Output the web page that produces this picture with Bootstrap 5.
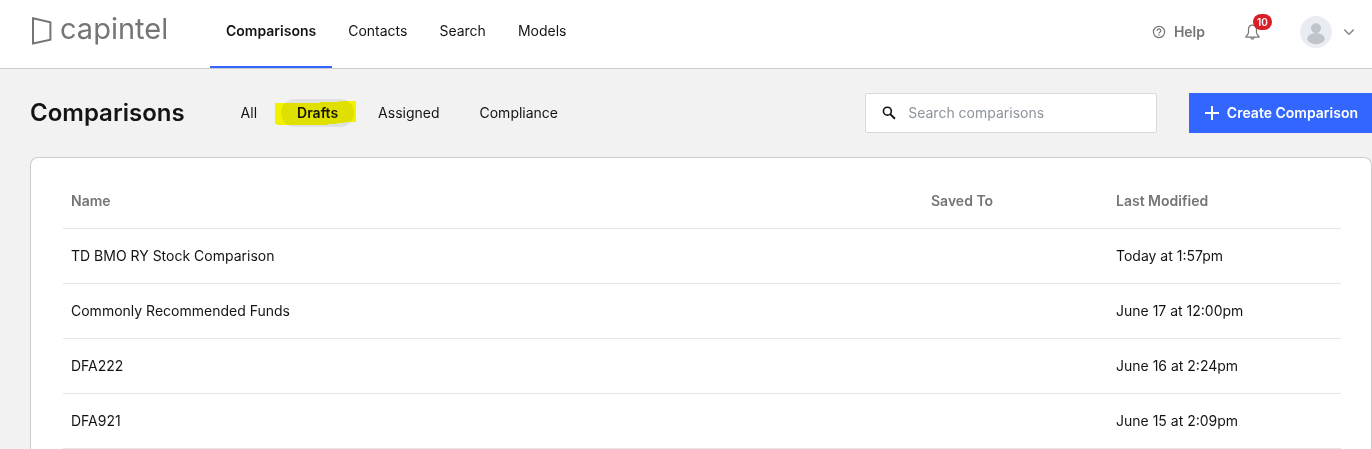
<!DOCTYPE html>
<html lang="en">
<head>
<meta charset="utf-8">
<meta name="viewport" content="width=device-width, initial-scale=1">
<title>Comparisons</title>
<link rel="stylesheet" href="https://cdn.jsdelivr.net/npm/bootstrap@5.3.0/dist/css/bootstrap.min.css">
<style>
  body { font-family: Inter, "Liberation Sans", sans-serif; font-size: 14px; line-height: 20px; color: #141414; background: #f2f2f2; }
  .topbar { height: 69px; background: #fff; border-bottom: 1px solid #ccc; }
  .brand-link { width: 210px; padding: 16px 0 0 31px; color: #757575; }
  .brand-text { font-weight: 400; font-size: 29px; line-height: 26px; margin-left: 8px; }
  .main-nav .nav-link { padding: 21px 16px 25px; border-bottom: 2px solid transparent; color: #141414; }
  .main-nav .nav-link.active { font-weight: 600; border-color: #3366ff; }
  .tools { height: 64px; padding-right: 14px; color: #757575; }
  .tools button { color: inherit; }
  .help-link { color: #757575; font-weight: 600; }
  .tools .alert-count { left: 8px; top: -10px; padding: 2px 4px; min-width: 19px; font-size: 10px; line-height: 12px; font-weight: 600; background: #da1e28; }
  .page-body { padding: 24px 0 0 30px; }
  .page-title { font-size: 24px; line-height: 40px; font-weight: 600; }
  .tab-pills { margin-left: 40px; }
  .tab-pills .nav-link { padding: 4px 16px; border-radius: 14px; color: #141414; }
  .tab-pills .nav-link.active { font-weight: 600; background: #e0e0e0; color: #141414; }
  .marker { left: -6px; top: 2px; mix-blend-mode: multiply; pointer-events: none; }
  .search-box { width: 292px; height: 40px; margin-right: 32px; border: 1px solid #d9d9d9; border-radius: 2px; background: #fff; padding: 0 16px; gap: 12px; }
  .search-box input { font-size: 14px; line-height: 20px; }
  .search-box input::placeholder { color: #8d949c; opacity: 1; }
  .create-btn { height: 40px; padding: 0 14px 0 15px; gap: 7px; border: 0; border-radius: 0; background: #3366ff; color: #fff; font-size: 14px; line-height: 20px; font-weight: 600; }
  .panel { margin-top: 24px; padding: 15px 30px 0 32px; border: 1px solid #ccc; border-bottom: 0; border-radius: 8px 8px 0 0; background: #fff; }
  .data-table { table-layout: fixed; color: #141414; }
  .data-table th, .data-table td { height: 55px; padding: 0 8px; vertical-align: middle; border-bottom: 1px solid #e6e6e6; color: inherit; }
  .data-table th { padding-top: 2px; color: #757575; font-weight: 600; }
  .col-saved { width: 185px; }
  .col-date { width: 233px; }
</style>
</head>
<body>
<div class="vh-100 d-flex flex-column overflow-hidden">
  <header class="topbar d-flex flex-shrink-0">
    <a href="#" class="brand-link d-flex align-items-start text-decoration-none">
      <svg width="21" height="29" viewBox="0 0 21 29" fill="none" stroke="currentColor" stroke-width="2" aria-hidden="true"><path d="M2 2.2 19.4 6.4V23.8L2 27.6Z"/></svg>
      <span class="brand-text">capintel</span>
    </a>
    <nav class="main-nav nav flex-nowrap">
      <a class="nav-link active" href="#">Comparisons</a>
      <a class="nav-link" href="#">Contacts</a>
      <a class="nav-link" href="#">Search</a>
      <a class="nav-link" href="#">Models</a>
    </nav>
    <div class="tools ms-auto d-flex align-items-center">
      <a href="#" class="help-link d-flex align-items-center gap-2 text-decoration-none">
        <svg width="14" height="14" viewBox="0 0 14 14" fill="none" stroke="currentColor" aria-hidden="true"><circle cx="7" cy="7" r="5.6" stroke-width="1.2"/><path d="M5.2 5.7a1.8 1.8 0 1 1 2.6 1.6Q7 7.7 7 8.5" stroke-width="1.2"/><circle cx="7" cy="10" r=".7" fill="currentColor" stroke="none"/></svg>
        Help
      </a>
      <button type="button" class="btn p-0 border-0 position-relative d-flex ms-4 me-4" aria-label="Notifications">
        <svg class="mx-3" width="15" height="16" viewBox="0 0 15 16" fill="none" stroke="currentColor" stroke-width="1.2" aria-hidden="true"><path d="M7.5 1.2C4.8 1.2 3.5 3.2 3.5 5.5V8.5C3.5 10 2.6 11 1 12.4V13.2H14V12.4C12.4 11 11.5 10 11.5 8.5V5.5C11.5 3.2 10.2 1.2 7.5 1.2ZM5.8 13.3C5.8 15.8 9.2 15.8 9.2 13.3"/></svg>
        <span class="alert-count badge rounded-pill position-absolute ms-3">10</span>
      </button>
      <button type="button" class="btn p-0 border-0 d-flex align-items-center gap-2" aria-label="Account">
        <svg width="32" height="32" viewBox="0 0 32 32" aria-hidden="true"><circle cx="16" cy="16" r="16" fill="#e9ecf2"/><circle cx="16" cy="12.3" r="5" fill="#bfc3ca"/><ellipse cx="16" cy="22.6" rx="8.8" ry="5.6" fill="#bfc3ca"/></svg>
        <svg width="18" height="16" viewBox="0 0 18 16" fill="none" stroke="#8c8c8c" stroke-width="1.5" aria-hidden="true"><path d="M4.3 5.6 9 10.2 13.7 5.6"/></svg>
      </button>
    </div>
  </header>

  <main class="page-body flex-grow-1">
    <div class="d-flex align-items-center">
      <h1 class="page-title mb-0">Comparisons</h1>
      <nav class="tab-pills nav flex-nowrap gap-2">
        <a class="nav-link" href="#">All</a>
        <div class="position-relative">
          <a class="nav-link active" href="#">Drafts</a>
          <svg class="marker position-absolute" width="81" height="24" viewBox="0 0 81 24" aria-hidden="true"><path d="M0 2H45V1H62L66 0H81V21H72L68 22H62V23H53V24H2V23H0Z" fill="#ff0"/></svg>
        </div>
        <a class="nav-link" href="#">Assigned</a>
        <a class="nav-link" href="#">Compliance</a>
      </nav>
      <label class="search-box d-flex align-items-center ms-auto">
        <svg width="16" height="16" viewBox="0 0 16 16" fill="none" stroke="#141414" aria-hidden="true"><circle cx="6" cy="6" r="4.4" stroke-width="1.8"/><path d="M9.2 9.2 14.4 14.4" stroke-width="2.2"/></svg>
        <input type="search" class="form-control border-0 p-0 shadow-none bg-transparent" placeholder="Search comparisons" aria-label="Search comparisons">
      </label>
      <button type="button" class="create-btn btn d-flex align-items-center text-nowrap">
        <svg width="16" height="16" viewBox="0 0 16 16" stroke="#fff" stroke-width="2" aria-hidden="true"><path d="M8 1V15M1 8H15"/></svg>
        Create Comparison
      </button>
    </div>

    <section class="panel">
      <table class="data-table table table-borderless mb-0">
        <colgroup><col><col class="col-saved"><col class="col-date"></colgroup>
        <thead><tr><th scope="col">Name</th><th scope="col">Saved To</th><th scope="col">Last Modified</th></tr></thead>
        <tbody>
          <tr><td>TD BMO RY Stock Comparison</td><td></td><td>Today at 1:57pm</td></tr>
          <tr><td>Commonly Recommended Funds</td><td></td><td>June 17 at 12:00pm</td></tr>
          <tr><td>DFA222</td><td></td><td>June 16 at 2:24pm</td></tr>
          <tr><td>DFA921</td><td></td><td>June 15 at 2:09pm</td></tr>
        </tbody>
      </table>
    </section>
  </main>
</div>
<script src="https://cdn.jsdelivr.net/npm/bootstrap@5.3.0/dist/js/bootstrap.bundle.min.js"></script>
</body>
</html>
